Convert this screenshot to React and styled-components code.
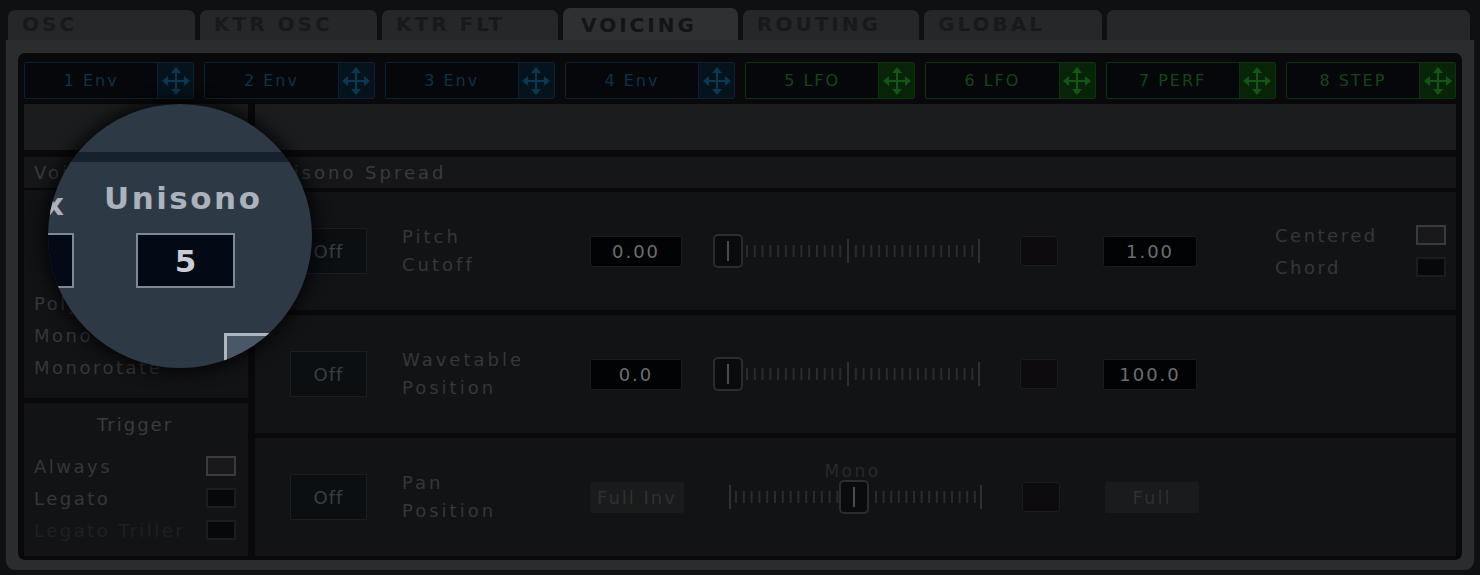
import React from 'react';
import styled, { createGlobalStyle } from 'styled-components';

const GlobalStyle = createGlobalStyle`
  html, body { margin: 0; padding: 0; background: #0f1012; }
  body { font-family: "DejaVu Sans", "Liberation Sans", sans-serif; }
  * { box-sizing: border-box; }
`;

const Screen = styled.div`
  position: relative;
  width: 1480px;
  height: 575px;
  overflow: hidden;
  background: #0f1012;
  padding-top: 8px;
  display: flex;
  flex-direction: column;
`;

/* ---------- tabs ---------- */
const TabBar = styled.div`
  display: flex;
  gap: 5px;
  height: 32px;
  padding: 0 10px 0 8px;
`;

const Tab = styled.div`
  flex: ${(p) => (p.$grow ? '1 1 auto' : `0 0 ${p.$w}px`)};
  margin-top: ${(p) => (p.$active ? 0 : 2)}px;
  background: ${(p) => (p.$active ? '#2f3032' : '#262729')};
  border-radius: 7px 7px 0 0;
  padding-left: ${(p) => (p.$active ? 18 : 14)}px;
  padding-top: ${(p) => (p.$active ? 5 : 2)}px;
  font-size: 20px;
  font-weight: 700;
  letter-spacing: 3px;
  color: ${(p) => (p.$active ? '#131415' : '#18191a')};
  white-space: nowrap;
`;

/* ---------- frame ---------- */
const Frame = styled.div`
  margin: 0 6px;
  height: 530px;
  background: #2b2c2e;
  border-radius: 0 0 9px 9px;
  padding: 13px 12px 10px;
`;

const Inner = styled.div`
  height: 100%;
  background: #09090b;
  border-radius: 7px;
  padding: 9px 6px 4px;
  display: flex;
  flex-direction: column;
`;

/* ---------- modulation sources ---------- */
const SourceRow = styled.div`
  display: grid;
  grid-template-columns: repeat(8, 1fr);
  column-gap: 10px;
  height: 37px;
`;

const palettes = {
  env: { border: '#0a2233', text: '#0e3249', cell: '#06131c', icon: '#0b3853' },
  lfo: { border: '#0b330d', text: '#124714', cell: '#082408', icon: '#145616' },
};

const Source = styled.div`
  display: flex;
  border: 1px solid ${(p) => palettes[p.$kind].border};
  background: #05070a;
  border-radius: 2px;
`;

const SourceName = styled.div`
  flex: 1;
  display: flex;
  align-items: center;
  justify-content: center;
  font-size: 16px;
  letter-spacing: 2px;
  color: ${(p) => palettes[p.$kind].text};
  white-space: nowrap;
`;

const Grip = styled.div`
  width: 36px;
  border-left: 1px solid ${(p) => palettes[p.$kind].border};
  background: ${(p) => palettes[p.$kind].cell};
  display: flex;
  align-items: center;
  justify-content: center;
`;

const MoveGlyph = ({ color }) => (
  <svg width="30" height="30" viewBox="0 0 30 30">
    <g stroke={color} strokeWidth="2" fill="none">
      <line x1="15" y1="6" x2="15" y2="24" />
      <line x1="6" y1="15" x2="24" y2="15" />
    </g>
    <g fill={color}>
      <polygon points="15,1 10,7 20,7" />
      <polygon points="15,29 10,23 20,23" />
      <polygon points="1,15 7,10 7,20" />
      <polygon points="29,15 23,10 23,20" />
    </g>
  </svg>
);

/* ---------- strip + header ---------- */
const SplitRow = styled.div`
  display: grid;
  grid-template-columns: 224px 1fr;
  column-gap: 7px;
  height: ${(p) => p.$h}px;
  margin-top: ${(p) => p.$mt}px;
`;

const StripCell = styled.div`
  background: #1b1c1e;
`;

const HeaderBar = styled.div`
  margin-top: 7px;
  height: 31px;
  background: #151618;
  display: flex;
  align-items: center;
  font-size: 18px;
  letter-spacing: 3px;
  color: #3a3b3d;
`;

const HeaderText = styled.span`
  width: ${(p) => (p.$w ? `${p.$w}px` : 'auto')};
  padding-left: ${(p) => p.$pl}px;
  white-space: nowrap;
`;

/* ---------- body ---------- */
const Body = styled.div`
  flex: 1;
  margin-top: 2px;
  display: grid;
  grid-template-columns: 224px 1fr;
  column-gap: 7px;
`;

const LeftCol = styled.div`
  display: flex;
  flex-direction: column;
  gap: 5px;
`;

const Box = styled.div`
  background: #121315;
  height: ${(p) => (p.$h ? `${p.$h}px` : 'auto')};
  flex: ${(p) => (p.$h ? 'none' : 1)};
  padding: ${(p) => p.$pad};
  display: flex;
  flex-direction: column;
`;

const BoxTitle = styled.div`
  text-align: center;
  font-size: 18px;
  letter-spacing: 2px;
  color: #3b3c3e;
  height: 32px;
  margin-bottom: 4px;
`;

const OptionRow = styled.div`
  display: flex;
  align-items: center;
  justify-content: space-between;
  height: 32px;
  width: ${(p) => (p.$w ? `${p.$w}px` : 'auto')};
  font-size: 18px;
  letter-spacing: 2.5px;
  color: ${(p) => (p.$dim ? '#1f2022' : '#363739')};
  white-space: nowrap;
`;

const Check = styled.div`
  width: 30px;
  height: 20px;
  border: 2px solid ${(p) => (p.$on ? '#3a3b3d' : '#1c1d1f')};
  background: ${(p) => (p.$on ? '#19191b' : '#07080a')};
`;

const RightCol = styled.div`
  display: flex;
  flex-direction: column;
  gap: 5px;
  padding-top: 2px;
`;

const Lane = styled.div`
  flex: 1;
  background: #121315;
  display: flex;
  align-items: center;
  padding-left: 35px;
`;

const OffButton = styled.div`
  width: 77px;
  height: 46px;
  border: 1px solid #1b1f22;
  background: #0b0f12;
  display: flex;
  align-items: center;
  justify-content: center;
  font-size: 18px;
  letter-spacing: 1px;
  color: #3a3d40;
`;

const LaneLabel = styled.div`
  margin-left: 35px;
  width: 188px;
  font-size: 18px;
  line-height: 28px;
  letter-spacing: 3px;
  color: #35373a;
`;

const ValueBox = styled.div`
  margin-left: ${(p) => p.$ml || 0}px;
  width: ${(p) => p.$w}px;
  height: 31px;
  border: 1px solid ${(p) => (p.$flat ? 'transparent' : '#1b1c1e')};
  background: ${(p) => (p.$flat ? '#1a1b1c' : '#020304')};
  border-radius: 2px;
  display: flex;
  align-items: center;
  justify-content: center;
  font-size: 18px;
  letter-spacing: 2px;
  color: ${(p) => (p.$flat ? '#2f3032' : '#6b6e71')};
`;

const SliderColumn = styled.div`
  margin-left: 31px;
  width: 267px;
  display: flex;
  flex-direction: column;
  align-items: center;
  padding-bottom: ${(p) => (p.$caption ? 16 : 0)}px;
`;

const SliderCaption = styled.div`
  height: 16px;
  line-height: 16px;
  margin-left: 8px;
  font-size: 17px;
  letter-spacing: 2.5px;
  color: #28292b;
`;

const Swatch = styled.div`
  margin-left: 40px;
  width: 38px;
  height: 30px;
  border: 1px solid #1c1d1f;
  border-radius: 3px;
  background: #0d0b0e;
`;

const OptionsCol = styled.div`
  margin-left: 78px;
  display: flex;
  flex-direction: column;
`;

/* Tick-ruler slider with a square thumb */
function Slider({ centered }) {
  const tick = '#2b2c2e';
  const small = [];
  const tall = [];
  let handle;
  if (!centered) {
    const step = 7.77;
    for (let k = 0; k < 30; k++) {
      const x = 33 + k * step;
      if (k === 13) tall.push(x);
      else small.push(x);
    }
    tall.push(265);
    handle = 1;
  } else {
    tall.push(14, 265);
    for (let k = 0; k < 14; k++) small.push(20 + k * 7.8);
    for (let k = 0; k < 14; k++) small.push(160 + k * 7.6);
    handle = 125;
  }
  return (
    <svg width="267" height="36" viewBox="0 0 267 36">
      {small.map((x, i) => (
        <rect key={`s${i}`} x={x} y="12" width="2" height="12" fill={tick} />
      ))}
      {tall.map((x, i) => (
        <rect key={`t${i}`} x={x} y="6" width="2" height="24" fill="#303133" />
      ))}
      <rect x={handle} y="2" width="28" height="32" rx="4" fill="#0a0b0c" stroke="#2c2d2f" strokeWidth="2" />
      <rect x={handle + 13} y="8" width="2" height="20" fill="#4a4d50" />
    </svg>
  );
}

/* ---------- magnifier ---------- */
const Lens = styled.div`
  position: absolute;
  left: 48px;
  top: 104px;
  width: 264px;
  height: 264px;
  border-radius: 50%;
  overflow: hidden;
  background: #2e3946;
  box-shadow: 0 0 14px 7px rgba(0, 0, 0, 0.6);
`;

const LensBand = styled.div`
  position: absolute;
  left: 0;
  right: 0;
  top: 48px;
  height: 10px;
  background: #17212d;
`;

const LensTitle = styled.div`
  position: absolute;
  top: ${(p) => p.$top}px;
  left: ${(p) => p.$left}px;
  font-size: 31px;
  font-weight: 700;
  letter-spacing: 2.5px;
  color: #aab2bb;
`;

const LensValue = styled.div`
  position: absolute;
  left: ${(p) => p.$left}px;
  top: 129px;
  width: ${(p) => p.$w}px;
  height: 55px;
  border: 2px solid #7f8994;
  background: #040a15;
  display: flex;
  align-items: center;
  justify-content: center;
  font-size: 31px;
  font-weight: 700;
  color: #c9ced4;
`;

const LensCheck = styled.div`
  position: absolute;
  left: 176px;
  top: 229px;
  width: 80px;
  height: 60px;
  border: 3px solid #aeb6bf;
  background: #4a5766;
`;

const sources = [
  ['1 Env', 'env'],
  ['2 Env', 'env'],
  ['3 Env', 'env'],
  ['4 Env', 'env'],
  ['5 LFO', 'lfo'],
  ['6 LFO', 'lfo'],
  ['7 PERF', 'lfo'],
  ['8 STEP', 'lfo'],
];

const tabs = [
  { label: 'OSC', w: 187 },
  { label: 'KTR OSC', w: 177 },
  { label: 'KTR FLT', w: 176 },
  { label: 'VOICING', w: 175, active: true },
  { label: 'ROUTING', w: 176 },
  { label: 'GLOBAL', w: 178 },
  { label: '', grow: true },
];

export default function App() {
  return (
    <>
      <GlobalStyle />
      <Screen>
        <TabBar>
          {tabs.map((t, i) => (
            <Tab key={i} $w={t.w} $grow={t.grow} $active={t.active}>
              {t.label}
            </Tab>
          ))}
        </TabBar>
        <Frame>
          <Inner>
            <SourceRow>
              {sources.map(([name, kind]) => (
                <Source key={name} $kind={kind}>
                  <SourceName $kind={kind}>{name}</SourceName>
                  <Grip $kind={kind}>
                    <MoveGlyph color={palettes[kind].icon} />
                  </Grip>
                </Source>
              ))}
            </SourceRow>

            <SplitRow $h={46} $mt={5}>
              <StripCell />
              <StripCell />
            </SplitRow>

            <HeaderBar>
              <HeaderText $w={231} $pl={10}>Voicing</HeaderText>
              <HeaderText $pl={8}>Unisono Spread</HeaderText>
            </HeaderBar>

            <Body>
              <LeftCol>
                <Box $h={208} $pad="97px 12px 0 10px">
                  <OptionRow>Poly</OptionRow>
                  <OptionRow>Mono</OptionRow>
                  <OptionRow>Monorotate</OptionRow>
                </Box>
                <Box $pad="11px 12px 0 10px">
                  <BoxTitle>Trigger</BoxTitle>
                  <OptionRow>
                    Always <Check $on />
                  </OptionRow>
                  <OptionRow>
                    Legato <Check />
                  </OptionRow>
                  <OptionRow $dim>
                    Legato Triller <Check />
                  </OptionRow>
                </Box>
              </LeftCol>

              <RightCol>
                <Lane>
                  <OffButton>Off</OffButton>
                  <LaneLabel>
                    Pitch
                    <br />
                    Cutoff
                  </LaneLabel>
                  <ValueBox $w={92}>0.00</ValueBox>
                  <SliderColumn>
                    <Slider />
                  </SliderColumn>
                  <Swatch />
                  <ValueBox $w={94} $ml={45}>1.00</ValueBox>
                  <OptionsCol>
                    <OptionRow $w={171}>
                      Centered <Check $on />
                    </OptionRow>
                    <OptionRow $w={171}>
                      Chord <Check />
                    </OptionRow>
                  </OptionsCol>
                </Lane>

                <Lane>
                  <OffButton>Off</OffButton>
                  <LaneLabel>
                    Wavetable
                    <br />
                    Position
                  </LaneLabel>
                  <ValueBox $w={92}>0.0</ValueBox>
                  <SliderColumn>
                    <Slider />
                  </SliderColumn>
                  <Swatch />
                  <ValueBox $w={94} $ml={45}>100.0</ValueBox>
                </Lane>

                <Lane>
                  <OffButton>Off</OffButton>
                  <LaneLabel>
                    Pan
                    <br />
                    Position
                  </LaneLabel>
                  <ValueBox $w={94} $flat>Full Inv</ValueBox>
                  <SliderColumn $caption>
                    <SliderCaption>Mono</SliderCaption>
                    <Slider centered />
                  </SliderColumn>
                  <Swatch />
                  <ValueBox $w={94} $ml={45} $flat>Full</ValueBox>
                </Lane>
              </RightCol>
            </Body>
          </Inner>
        </Frame>

        <Lens>
          <LensBand />
          <LensTitle $left={-4} $top={82}>x</LensTitle>
          <LensTitle $left={56} $top={76}>Unisono</LensTitle>
          <LensValue $left={-40} $w={66} />
          <LensValue $left={88} $w={99}>5</LensValue>
          <LensCheck />
        </Lens>
      </Screen>
    </>
  );
}
